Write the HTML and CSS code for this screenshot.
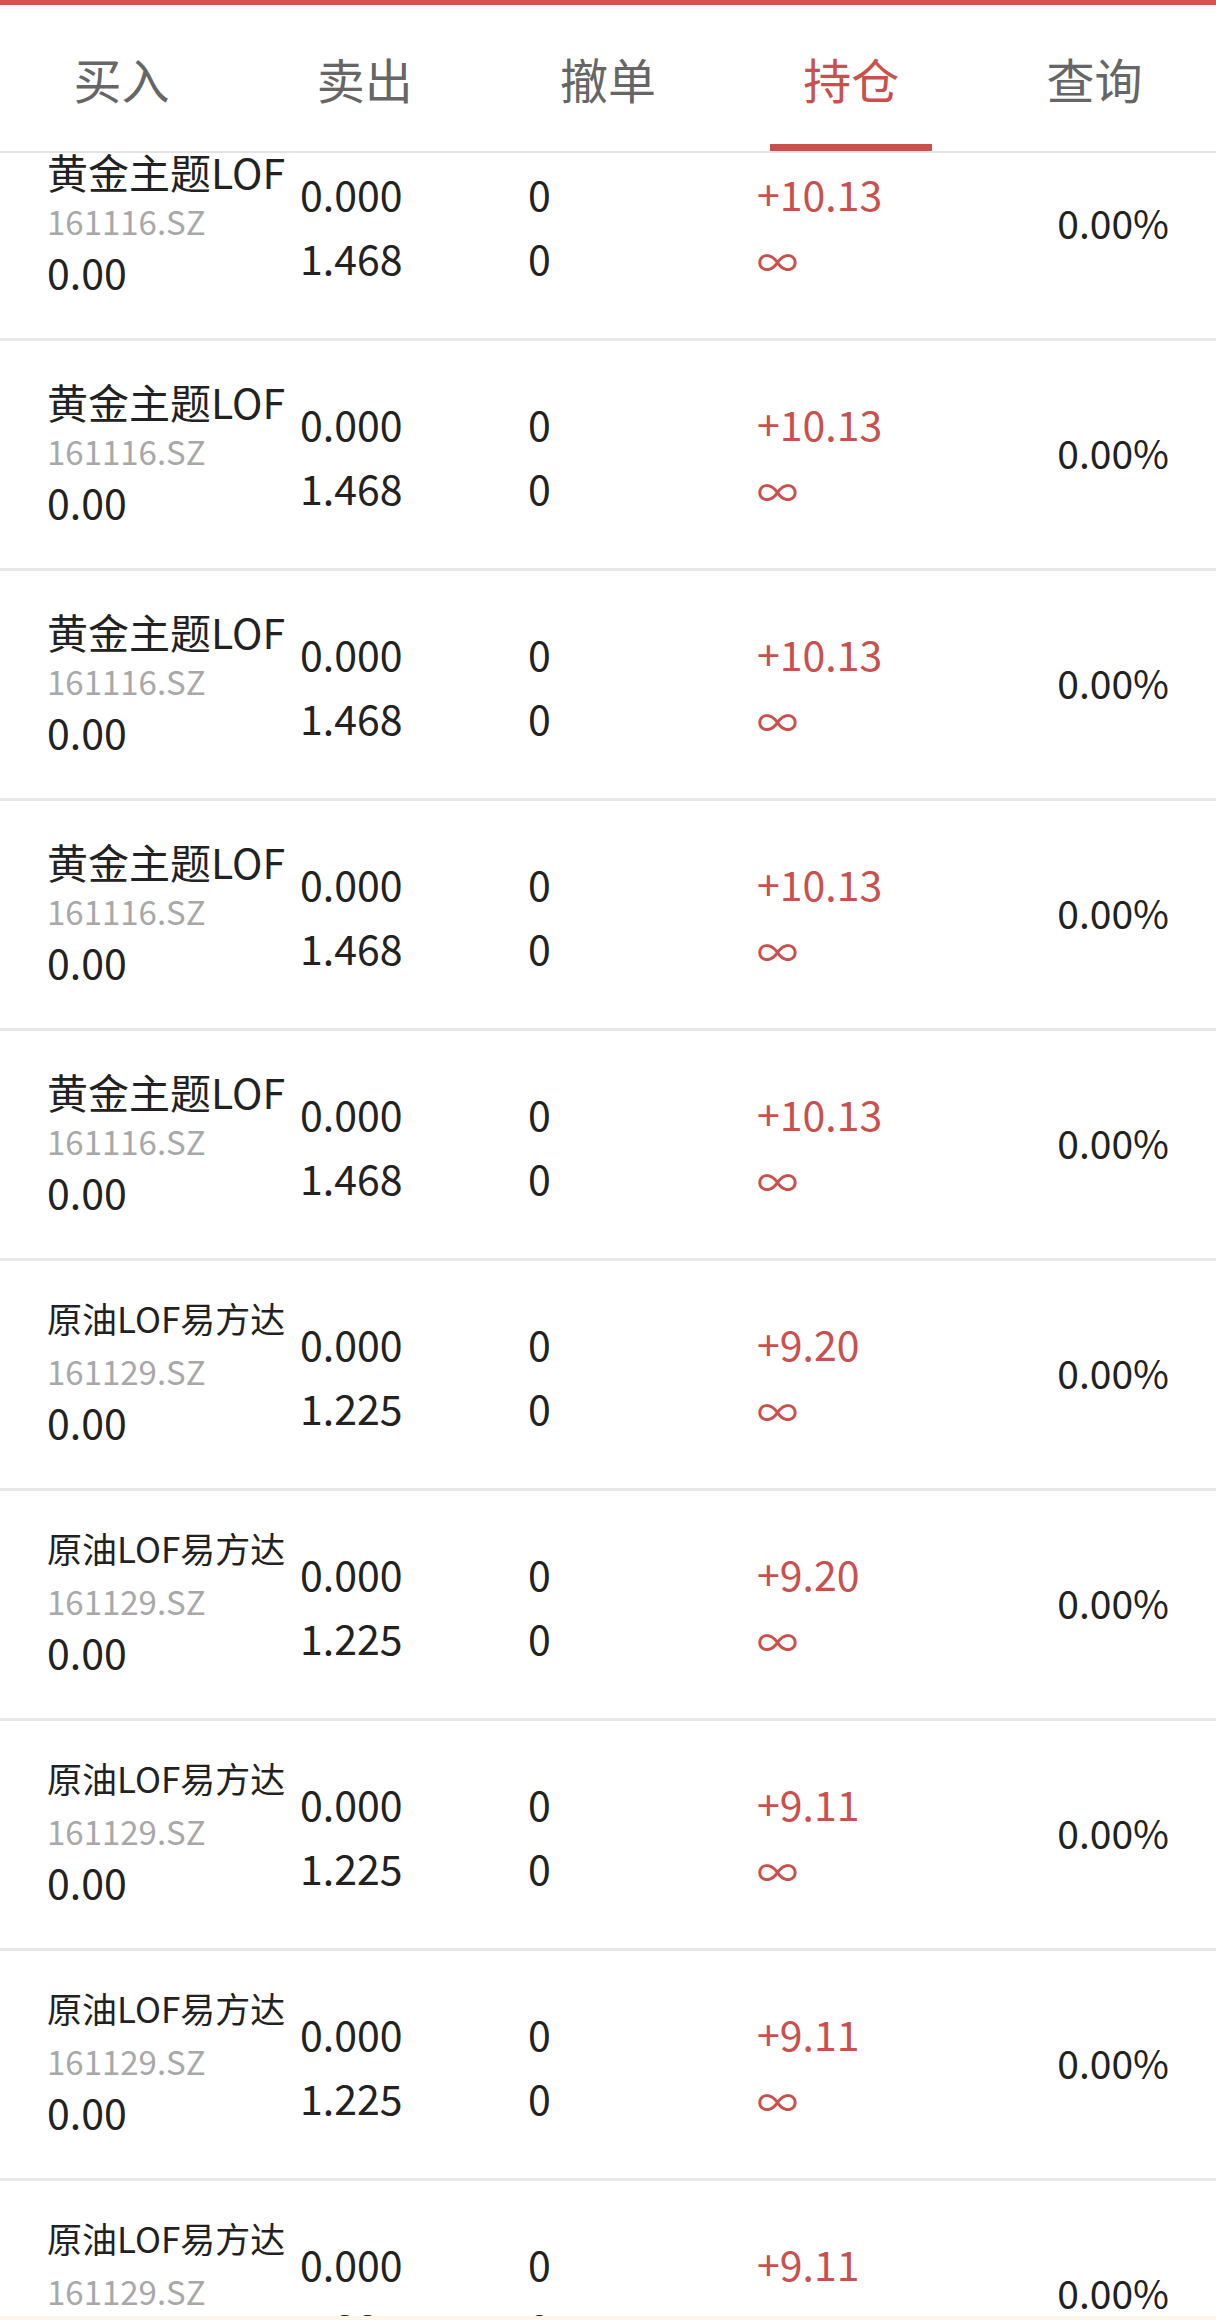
FILE: index.html
```html
<!DOCTYPE html>
<html>
	<head>
		<title>持仓</title>
		<meta http-equiv="Content-Type" content="text/html; charset=utf-8" />
		<meta name="viewport" content="initial-scale=1.0, width=device-width, user-scalable=no" />
		<link rel="stylesheet" href="styles.css">
	</head>
	<body>
		<div class="topBar"></div>
		<div class="tabBar">
			<div class="tab">买入</div>
			<div class="tab">卖出</div>
			<div class="tab">撤单</div>
			<div class="tab active">持仓</div>
			<div class="tab">查询</div>
		</div>

		<div class="list">
			<div class="row first">
				<div class="colName">
					<div class="name">黄金主题LOF</div>
					<div class="code">161116.SZ</div>
					<div class="value">0.00</div>
				</div>
				<div class="colPair"><div>0.000</div><div>1.468</div></div>
				<div class="colPair"><div>0</div><div>0</div></div>
				<div class="colPair up"><div>+10.13</div><div class="inf">∞</div></div>
				<div class="colRate">0.00%</div>
			</div>
			<div class="row">
				<div class="colName">
					<div class="name">黄金主题LOF</div>
					<div class="code">161116.SZ</div>
					<div class="value">0.00</div>
				</div>
				<div class="colPair"><div>0.000</div><div>1.468</div></div>
				<div class="colPair"><div>0</div><div>0</div></div>
				<div class="colPair up"><div>+10.13</div><div class="inf">∞</div></div>
				<div class="colRate">0.00%</div>
			</div>
			<div class="row">
				<div class="colName">
					<div class="name">黄金主题LOF</div>
					<div class="code">161116.SZ</div>
					<div class="value">0.00</div>
				</div>
				<div class="colPair"><div>0.000</div><div>1.468</div></div>
				<div class="colPair"><div>0</div><div>0</div></div>
				<div class="colPair up"><div>+10.13</div><div class="inf">∞</div></div>
				<div class="colRate">0.00%</div>
			</div>
			<div class="row">
				<div class="colName">
					<div class="name">黄金主题LOF</div>
					<div class="code">161116.SZ</div>
					<div class="value">0.00</div>
				</div>
				<div class="colPair"><div>0.000</div><div>1.468</div></div>
				<div class="colPair"><div>0</div><div>0</div></div>
				<div class="colPair up"><div>+10.13</div><div class="inf">∞</div></div>
				<div class="colRate">0.00%</div>
			</div>
			<div class="row">
				<div class="colName">
					<div class="name">黄金主题LOF</div>
					<div class="code">161116.SZ</div>
					<div class="value">0.00</div>
				</div>
				<div class="colPair"><div>0.000</div><div>1.468</div></div>
				<div class="colPair"><div>0</div><div>0</div></div>
				<div class="colPair up"><div>+10.13</div><div class="inf">∞</div></div>
				<div class="colRate">0.00%</div>
			</div>
			<div class="row">
				<div class="colName">
					<div class="name long">原油LOF易方达</div>
					<div class="code">161129.SZ</div>
					<div class="value">0.00</div>
				</div>
				<div class="colPair"><div>0.000</div><div>1.225</div></div>
				<div class="colPair"><div>0</div><div>0</div></div>
				<div class="colPair up"><div>+9.20</div><div class="inf">∞</div></div>
				<div class="colRate">0.00%</div>
			</div>
			<div class="row">
				<div class="colName">
					<div class="name long">原油LOF易方达</div>
					<div class="code">161129.SZ</div>
					<div class="value">0.00</div>
				</div>
				<div class="colPair"><div>0.000</div><div>1.225</div></div>
				<div class="colPair"><div>0</div><div>0</div></div>
				<div class="colPair up"><div>+9.20</div><div class="inf">∞</div></div>
				<div class="colRate">0.00%</div>
			</div>
			<div class="row">
				<div class="colName">
					<div class="name long">原油LOF易方达</div>
					<div class="code">161129.SZ</div>
					<div class="value">0.00</div>
				</div>
				<div class="colPair"><div>0.000</div><div>1.225</div></div>
				<div class="colPair"><div>0</div><div>0</div></div>
				<div class="colPair up"><div>+9.11</div><div class="inf">∞</div></div>
				<div class="colRate">0.00%</div>
			</div>
			<div class="row">
				<div class="colName">
					<div class="name long">原油LOF易方达</div>
					<div class="code">161129.SZ</div>
					<div class="value">0.00</div>
				</div>
				<div class="colPair"><div>0.000</div><div>1.225</div></div>
				<div class="colPair"><div>0</div><div>0</div></div>
				<div class="colPair up"><div>+9.11</div><div class="inf">∞</div></div>
				<div class="colRate">0.00%</div>
			</div>
			<div class="row">
				<div class="colName">
					<div class="name long">原油LOF易方达</div>
					<div class="code">161129.SZ</div>
					<div class="value">0.00</div>
				</div>
				<div class="colPair"><div>0.000</div><div>1.225</div></div>
				<div class="colPair"><div>0</div><div>0</div></div>
				<div class="colPair up"><div>+9.11</div><div class="inf">∞</div></div>
				<div class="colRate">0.00%</div>
			</div>
		</div>

		<div class="bottomEdge"></div>
	</body>
</html>
```

FILE: styles.css
```css
body {
	margin: 0px;
	padding: 0px;
	height: 2320px;
	overflow: hidden;
	background: #FFF;
	font-family: "Noto Sans CJK SC", "Noto Sans", sans-serif;
	color: #222;
}
.topBar {
	height: 5px;
	background: #D8514E;
}
.tabBar {
	display: grid;
	grid-template-columns: repeat(5, 1fr);
	height: 146px;
	border-bottom: 2px solid #E3E3E3;
	background: #FFF;
	position: relative;
	z-index: 2;
}
.tab {
	position: relative;
	display: flex;
	align-items: center;
	justify-content: center;
	font-size: 48px;
	color: #666;
}
.tab.active {
	color: #C9504C;
}
/* red line under the selected tab */
.tab.active:after {
	content: "";
	position: absolute;
	bottom: 0px;
	left: 50%;
	width: 162px;
	height: 7px;
	margin-left: -81px;
	background: #C9504C;
}
.list {
	height: 2167px;
	overflow: hidden;
}
.row {
	display: grid;
	grid-template-columns: 253px 228px 229px 1fr auto;
	align-items: center;
	height: 227px;
	padding: 0px 47px;
	border-bottom: 3px solid #E8E8E8;
}
/* list is scrolled a little, first row slides under the tabs */
.row.first {
	margin-top: -42px;
}
.colName {
	padding-bottom: 8px;
}
.colName div {
	height: 50px;
	line-height: 50px;
	white-space: nowrap;
}
.name {
	font-size: 41px;
	color: #222;
}
.name.long {
	font-size: 35px;
	line-height: 44px !important;
}
.code {
	font-size: 33px;
	color: #A8A8A8;
}
.value {
	font-size: 41px;
}
.colPair div {
	height: 64px;
	line-height: 64px;
	font-size: 41px;
	white-space: nowrap;
}
.colPair .inf {
	line-height: 70px;
}
.colPair.up {
	color: #C9504C;
}
.colRate {
	font-size: 39px;
	padding-bottom: 6px;
	text-align: right;
}
.bottomEdge {
	position: fixed;
	left: 0px;
	bottom: 0px;
	width: 100%;
	height: 4px;
	background: #FBF6E8;
}
```
